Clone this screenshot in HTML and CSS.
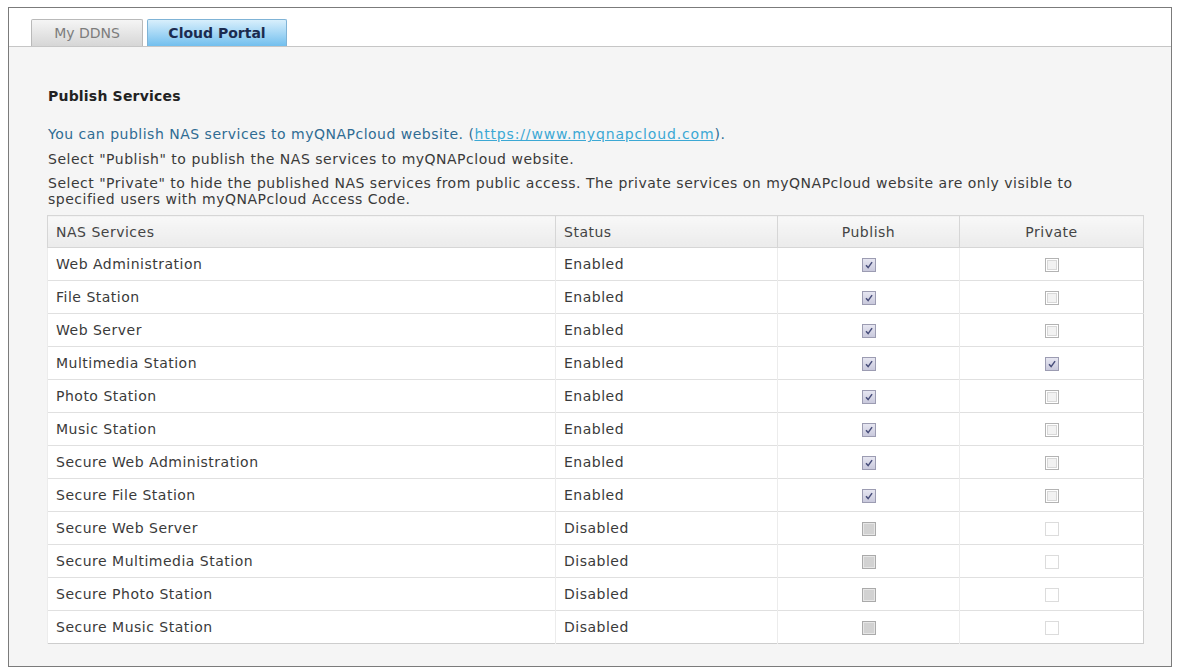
FILE: index.html
```html
<!DOCTYPE html>
<html lang="en">
<head>
    <meta charset="UTF-8">
    <title>myQNAPcloud - Cloud Portal</title>
    <link rel="stylesheet" href="styles.css">
</head>
<body>
    <div class="panel">
        <div class="tabs">
            <div class="tab">My DDNS</div>
            <div class="tab active">Cloud Portal</div>
        </div>

        <div class="content">
            <h3 class="title">Publish Services</h3>
            <p class="note note-blue">You can publish NAS services to myQNAPcloud website. (<a href="#">https://www.myqnapcloud.com</a>).</p>
            <p class="note">Select "Publish" to publish the NAS services to myQNAPcloud website.</p>
            <p class="note">Select "Private" to hide the published NAS services from public access. The private services on myQNAPcloud website are only visible to specified users with myQNAPcloud Access Code.</p>

            <table class="services">
                <colgroup>
                    <col class="col-name">
                    <col class="col-status">
                    <col class="col-publish">
                    <col class="col-private">
                </colgroup>
                <thead>
                    <tr>
                        <th>NAS Services</th>
                        <th>Status</th>
                        <th class="center">Publish</th>
                        <th class="center">Private</th>
                    </tr>
                </thead>
                <tbody>
                    <!-- check: publish / private state per service -->
                    <tr><td>Web Administration</td><td>Enabled</td><td class="center"><span class="cb on"><svg viewBox="0 0 14 14"><path d="M3.5 7.2 6 10 10.6 3.6"/></svg></span></td><td class="center"><span class="cb off"></span></td></tr>
                    <tr><td>File Station</td><td>Enabled</td><td class="center"><span class="cb on"><svg viewBox="0 0 14 14"><path d="M3.5 7.2 6 10 10.6 3.6"/></svg></span></td><td class="center"><span class="cb off"></span></td></tr>
                    <tr><td>Web Server</td><td>Enabled</td><td class="center"><span class="cb on"><svg viewBox="0 0 14 14"><path d="M3.5 7.2 6 10 10.6 3.6"/></svg></span></td><td class="center"><span class="cb off"></span></td></tr>
                    <tr><td>Multimedia Station</td><td>Enabled</td><td class="center"><span class="cb on"><svg viewBox="0 0 14 14"><path d="M3.5 7.2 6 10 10.6 3.6"/></svg></span></td><td class="center"><span class="cb on"><svg viewBox="0 0 14 14"><path d="M3.5 7.2 6 10 10.6 3.6"/></svg></span></td></tr>
                    <tr><td>Photo Station</td><td>Enabled</td><td class="center"><span class="cb on"><svg viewBox="0 0 14 14"><path d="M3.5 7.2 6 10 10.6 3.6"/></svg></span></td><td class="center"><span class="cb off"></span></td></tr>
                    <tr><td>Music Station</td><td>Enabled</td><td class="center"><span class="cb on"><svg viewBox="0 0 14 14"><path d="M3.5 7.2 6 10 10.6 3.6"/></svg></span></td><td class="center"><span class="cb off"></span></td></tr>
                    <tr><td>Secure Web Administration</td><td>Enabled</td><td class="center"><span class="cb on"><svg viewBox="0 0 14 14"><path d="M3.5 7.2 6 10 10.6 3.6"/></svg></span></td><td class="center"><span class="cb off"></span></td></tr>
                    <tr><td>Secure File Station</td><td>Enabled</td><td class="center"><span class="cb on"><svg viewBox="0 0 14 14"><path d="M3.5 7.2 6 10 10.6 3.6"/></svg></span></td><td class="center"><span class="cb off"></span></td></tr>
                    <tr><td>Secure Web Server</td><td>Disabled</td><td class="center"><span class="cb grey"></span></td><td class="center"><span class="cb blank"></span></td></tr>
                    <tr><td>Secure Multimedia Station</td><td>Disabled</td><td class="center"><span class="cb grey"></span></td><td class="center"><span class="cb blank"></span></td></tr>
                    <tr><td>Secure Photo Station</td><td>Disabled</td><td class="center"><span class="cb grey"></span></td><td class="center"><span class="cb blank"></span></td></tr>
                    <tr><td>Secure Music Station</td><td>Disabled</td><td class="center"><span class="cb grey"></span></td><td class="center"><span class="cb blank"></span></td></tr>
                </tbody>
            </table>
        </div>
    </div>
</body>
</html>
```

FILE: styles.css
```css
body {
    margin: 0;
    background: #ffffff;
    font-family: "DejaVu Sans", Verdana, sans-serif;
    font-size: 14px;
    color: #3a3a3a;
}

.panel {
    margin: 7px 6px 0 8px;
    border: 1px solid #7b7b7b;
    background: #f5f5f5;
}

/* tab strip */
.tabs {
    display: flex;
    gap: 4px;
    padding: 11px 0 0 22px;
    background: #ffffff;
    border-bottom: 1px solid #c6c6c6;
}

.tab {
    box-sizing: border-box;
    width: 112px;
    height: 27px;
    line-height: 26px;
    text-align: center;
    color: #7c7c7c;
    border: 1px solid #b9b9b9;
    border-bottom: none;
    border-radius: 2px 2px 0 0;
    background: linear-gradient(#f5f5f5, #d6d6d6);
}

.tab.active {
    width: 140px;
    font-weight: bold;
    color: #1b2b4f;
    border-color: #7fb3d6;
    background: linear-gradient(#d8effc, #72bfee);
}

/* content */
.content {
    padding: 41px 28px 22px 38px;
}

.title {
    margin: 0 0 22px 1px;
    font-size: 14px;
    font-weight: bold;
    line-height: 16px;
    letter-spacing: 0.2px;
    color: #222222;
}

.note {
    margin: 0 0 8px 1px;
    line-height: 16px;
    letter-spacing: 0.5px;
}

.note-blue {
    color: #2f6c93;
    margin-bottom: 9px;
}

.note-blue a {
    color: #3ba8d4;
    letter-spacing: 0.85px;
}

.services {
    width: 100%;
    margin-top: 7px;
    table-layout: fixed;
    border-collapse: collapse;
    background: #ffffff;
    border: 1px solid #cdcdcd;
    letter-spacing: 0.5px;
}

.col-name { width: 508px; }
.col-status { width: 222px; }
.col-publish { width: 182px; }
.col-private { width: 184px; }

.services th,
.services td {
    padding: 0 8px;
    text-align: left;
}

.services th {
    height: 31px;
    font-weight: normal;
    color: #444444;
    background: linear-gradient(#f8f8f8, #ebebeb);
    border: 1px solid #d6d6d6;
}

.services td {
    height: 32px;
    border-top: 1px solid #e0e0e0;
    border-left: 1px solid #ececec;
}

.services .center {
    text-align: center;
}

/* checkboxes */
.cb {
    display: inline-block;
    box-sizing: border-box;
    width: 14px;
    height: 14px;
    vertical-align: middle;
    border: 1px solid #b3b3b3;
}

.cb svg {
    display: block;
    width: 12px;
    height: 12px;
    fill: none;
    stroke: #474d7a;
    stroke-width: 1.7;
}

.cb.on {
    border-color: #9c9cb2;
    background: linear-gradient(#e6e6f1, #c9c9dc);
}

.cb.off {
    background: #f2f2f2;
    box-shadow: inset 0 0 0 1px #ffffff, inset 0 0 0 2px #d8d8d8;
}

.cb.grey {
    border-color: #aaaaaa;
    background: #d2d2d2;
    box-shadow: inset 0 0 0 1px #e6e6e6;
}

.cb.blank {
    border-color: #dcdcdc;
    background: #ffffff;
}
```
